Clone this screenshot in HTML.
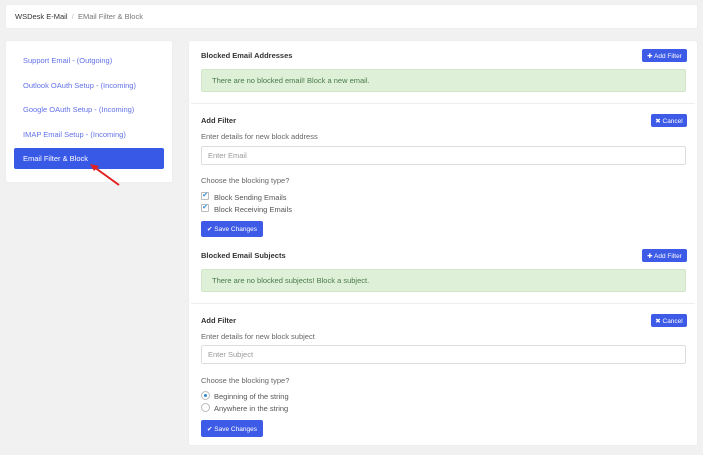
<!DOCTYPE html>
<html><head><meta charset="utf-8"><style>
*{box-sizing:border-box;margin:0;padding:0}
body{width:703px;height:455px;background:#f1f1f1;font-family:"Liberation Sans",sans-serif;font-size:7.5px;color:#666;position:relative;overflow:hidden}
.a{position:absolute}
.box{background:#fff;border-radius:2px;box-shadow:0 0 1px rgba(0,0,0,.1)}
.h{font-weight:bold;color:#333;font-size:7.5px}
.btn{position:absolute;background:#3d5be6;color:#fff;border-radius:2px;font-size:6.5px;display:flex;align-items:center;justify-content:center;gap:2px}
.alert{position:absolute;left:12px;width:485px;height:23px;background:#dff0d8;border:1px solid #d0e6c6;border-radius:2px;color:#4a7a4a;padding-left:10px;line-height:21px}
.inp{position:absolute;left:12px;width:485px;height:19px;border:1px solid #ddd;border-radius:2px;padding-left:6px;line-height:17px;color:#999}
.sep{position:absolute;left:2px;right:2px;height:1px;background:#eee}
.side{color:#6272e8;position:absolute;left:17px}
.cb{position:absolute;left:12px;width:8px;height:8px;border:1px solid #bbb;border-radius:1px;color:#2e8bd0;font-size:7px;line-height:6px;text-align:center}
.rd{position:absolute;left:12px;width:9px;height:9px;border:1px solid #bbb;border-radius:50%}
</style></head><body>
<div class="a box" style="left:6px;top:5px;width:691px;height:23px;padding-left:9px;line-height:23px"><span style="color:#333">WSDesk E-Mail</span> <span style="color:#bbb">&nbsp;/&nbsp;</span> <span style="color:#777">EMail Filter &amp; Block</span></div>
<div class="a box" style="left:6px;top:41px;width:166px;height:141px">
<div class="side" style="top:15px">Support Email - (Outgoing)</div>
<div class="side" style="top:40px">Outlook OAuth Setup - (Incoming)</div>
<div class="side" style="top:64px">Google OAuth Setup - (Incoming)</div>
<div class="side" style="top:89px">IMAP Email Setup - (Incoming)</div>
<div class="a" style="left:8px;top:107px;width:150px;height:21px;background:#3858e6;border-radius:2px;color:#fff;padding-left:9px;line-height:21px">Email Filter &amp; Block</div>
</div>
<svg class="a" style="left:85px;top:160px" width="40" height="30"><line x1="34" y1="25" x2="9" y2="7" stroke="#e02020" stroke-width="2"/><polygon points="5,4 14,6 9,11" fill="#e02020"/></svg>
<div class="a box" style="left:189px;top:41px;width:508px;height:404px">
<div class="a h" style="left:12px;top:10px">Blocked Email Addresses</div>
<div class="btn" style="left:453px;top:8px;width:45px;height:13px">✚ Add Filter</div>
<div class="alert" style="top:28px">There are no blocked email! Block a new email.</div>
<div class="sep" style="top:62px"></div>
<div class="a h" style="left:12px;top:75px">Add Filter</div>
<div class="btn" style="left:462px;top:73px;width:36px;height:13px">✖ Cancel</div>
<div class="a" style="left:12px;top:91px">Enter details for new block address</div>
<div class="inp" style="top:105px">Enter Email</div>
<div class="a" style="left:12px;top:135px">Choose the blocking type?</div>
<div class="cb" style="top:151px">✔</div><div class="a" style="left:25px;top:152px;color:#555">Block Sending Emails</div>
<div class="cb" style="top:163px">✔</div><div class="a" style="left:25px;top:164px;color:#555">Block Receiving Emails</div>
<div class="btn" style="left:12px;top:180px;width:62px;height:16px">✔ Save Changes</div>
<div class="a h" style="left:12px;top:210px">Blocked Email Subjects</div>
<div class="btn" style="left:453px;top:208px;width:45px;height:13px">✚ Add Filter</div>
<div class="alert" style="top:228px">There are no blocked subjects! Block a subject.</div>
<div class="sep" style="top:262px"></div>
<div class="a h" style="left:12px;top:275px">Add Filter</div>
<div class="btn" style="left:462px;top:273px;width:36px;height:13px">✖ Cancel</div>
<div class="a" style="left:12px;top:291px">Enter details for new block subject</div>
<div class="inp" style="top:304px">Enter Subject</div>
<div class="a" style="left:12px;top:335px">Choose the blocking type?</div>
<div class="rd" style="top:350px"><div style="width:3px;height:3px;background:#2e8bd0;border-radius:50%;margin:2px"></div></div><div class="a" style="left:25px;top:351px;color:#555">Beginning of the string</div>
<div class="rd" style="top:362px"></div><div class="a" style="left:25px;top:363px;color:#555">Anywhere in the string</div>
<div class="btn" style="left:12px;top:379px;width:62px;height:17px">✔ Save Changes</div>
</div>
</body></html>
